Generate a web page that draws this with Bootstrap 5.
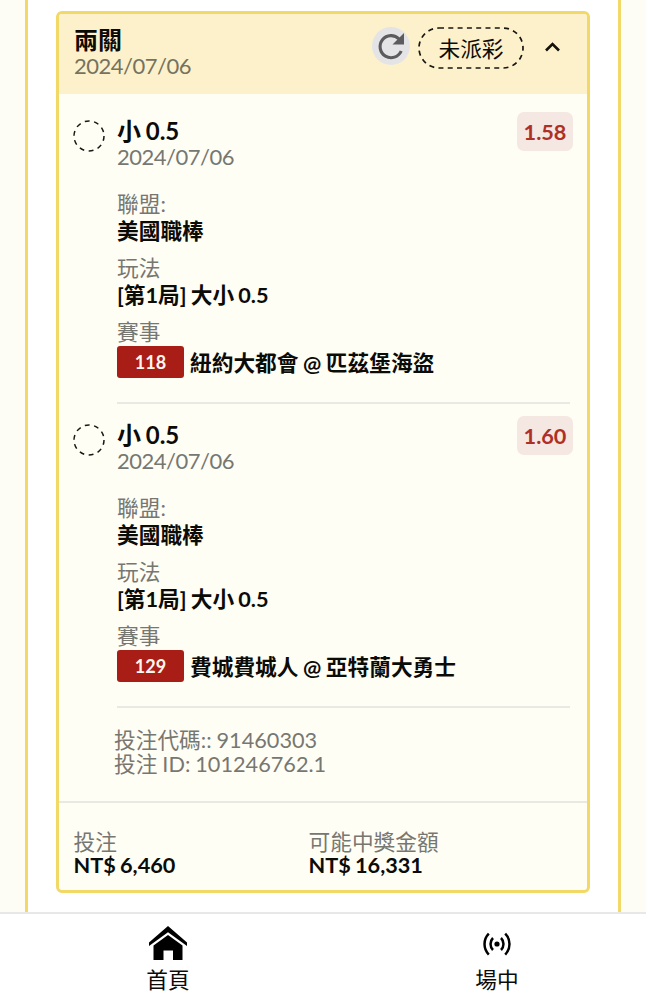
<!DOCTYPE html>
<html lang="zh-Hant">
<head>
<meta charset="utf-8">
<meta name="viewport" content="width=device-width, initial-scale=1">
<title>投注紀錄</title>
<link href="https://cdn.jsdelivr.net/npm/bootstrap@5.3.0/dist/css/bootstrap.min.css" rel="stylesheet">
<style>
  body { font-family: Lato, "Noto Sans CJK TC", sans-serif; font-size: 21.7px; line-height: 27px; color: #0b0b08; background: #fefdf5; height: 1000px; overflow: hidden; }
  .sheet { width: 596px; margin-left: 25px; height: 912px; border: solid #f2d967; border-width: 0 3px; background: #fff; padding: 11px 28px 0; }
  .slip { border: 3px solid #f2d967; border-radius: 6px; background: #fffef5; height: 882px; overflow: hidden; }
  .slip-head { height: 80px; background: #fcf1cb; padding: 13px 14px 0 15px; }
  .slip-head .quiet { color: #77715d; }
  .quiet { color: #777772; }
  .strong { font-weight: 700; word-spacing: -1.1px; }
  .tight { line-height: 25.5px; }
  .title { font-size: 24px; }
  .date { font-size: 22px; letter-spacing: -.5px; }
  .reload { width: 38px; height: 38px; background: #e4e4e6; }
  .leg { padding: 24px 14px 0; height: 304px; }
  .dot { width: 32px; height: 32px; margin: 2px 12px 0 0; }
  .leg-body { border-bottom: 2px solid #e9e9e3; margin-right: 3px; height: 286px; }
  .odds { width: 56px; height: 39px; line-height: 40px; border-radius: 7px; background: #f5e7e1; color: #ad3027; margin: -6px -3px 0 0; }
  .pair { margin-bottom: 10px; }
  .first { margin-top: 22px; }
  .num { width: 67px; height: 32px; line-height: 33px; border-radius: 3px; background: #a91d17; color: #fff7ee; font-size: 18px; margin-right: 6px; }
  .teams { padding-top: 2px; word-spacing: -.7px; }
  .codes { padding: 27px 0 0 55px; line-height: 23.7px; height: 99px; word-spacing: -.6px; }
  .totals { border-top: 2px solid #e9e9e3; padding: 28px 14.5px 0; line-height: 23px; }
  .stake { width: 235px; }
  .tabs { height: 88px; border-top: 2px solid #e8e8e8; background: #fff; line-height: 26px; }
  .tab-home { width: 336px; }
  .tab-live { width: 322px; }
</style>
</head>
<body>
<main class="sheet">
  <section class="slip">
    <header class="slip-head d-flex justify-content-between">
      <div class="tight">
        <div class="strong title">兩關</div>
        <div class="quiet date">2024/07/06</div>
      </div>
      <div class="d-flex align-items-start">
        <div class="reload rounded-circle">
          <svg class="d-block" width="38" height="38" viewBox="0 0 38 38"><path d="M29.200 24A11 11 0 1 1 27 12" fill="none" stroke="#5c5c5e" stroke-width="3.100"/><path d="M32 6v11.500H20.500z" fill="#5c5c5e"/></svg>
        </div>
        <div class="ms-2 d-grid" style="width:106px">
          <svg style="grid-area:1/1" width="106" height="42" viewBox="0 0 106 42"><rect x="1" y="1" width="104" height="40" rx="20" fill="none" stroke="#171611" stroke-width="1.7" stroke-dasharray="5 4.3"/></svg>
          <div class="text-center" style="grid-area:1/1;line-height:45px">未派彩</div>
        </div>
        <svg style="margin:13px 12px 0 20px" width="17" height="14" viewBox="0 0 17 14"><path d="M2 10.5 8.5 4l6.500 6.500" fill="none" stroke="#12110c" stroke-width="2.600"/></svg>
      </div>
    </header>

    <article class="leg d-flex">
      <svg class="dot flex-shrink-0" viewBox="0 0 32 32"><circle cx="16" cy="16" r="15" fill="none" stroke="#171714" stroke-width="1.5" stroke-dasharray="4.9 4.524"/></svg>
      <div class="leg-body flex-grow-1">
        <div class="d-flex justify-content-between tight">
          <div><div class="strong title">小 0.5</div><div class="quiet date">2024/07/06</div></div>
          <div class="odds strong text-center">1.58</div>
        </div>
        <div class="pair first"><div class="quiet">聯盟:</div><div class="strong">美國職棒</div></div>
        <div class="pair"><div class="quiet">玩法</div><div class="strong">[第1局] 大小 0.5</div></div>
        <div class="quiet">賽事</div>
        <div class="d-flex align-items-center"><span class="num text-center strong">118</span><span class="strong teams">紐約大都會 @ 匹茲堡海盜</span></div>
      </div>
    </article>

    <article class="leg d-flex">
      <svg class="dot flex-shrink-0" viewBox="0 0 32 32"><circle cx="16" cy="16" r="15" fill="none" stroke="#171714" stroke-width="1.5" stroke-dasharray="4.9 4.524"/></svg>
      <div class="leg-body flex-grow-1">
        <div class="d-flex justify-content-between tight">
          <div><div class="strong title">小 0.5</div><div class="quiet date">2024/07/06</div></div>
          <div class="odds strong text-center">1.60</div>
        </div>
        <div class="pair first"><div class="quiet">聯盟:</div><div class="strong">美國職棒</div></div>
        <div class="pair"><div class="quiet">玩法</div><div class="strong">[第1局] 大小 0.5</div></div>
        <div class="quiet">賽事</div>
        <div class="d-flex align-items-center"><span class="num text-center strong">129</span><span class="strong teams">費城費城人 @ 亞特蘭大勇士</span></div>
      </div>
    </article>

    <div class="codes quiet">
      <div>投注代碼:: 91460303</div>
      <div>投注 ID: 101246762.1</div>
    </div>
    <footer class="totals d-flex">
      <div class="stake"><div class="quiet">投注</div><div class="strong">NT$ 6,460</div></div>
      <div><div class="quiet">可能中獎金額</div><div class="strong">NT$ 16,331</div></div>
    </footer>
  </section>
</main>
<nav class="tabs d-flex">
  <a class="tab-home flex-shrink-0 d-flex flex-column align-items-center text-reset text-decoration-none">
    <svg style="margin-top:12px" width="38" height="35" viewBox="0 0 38 35"><path d="M0 16.5 19 0l19 16.5V20L19 6.200 0 20z"/><path d="M4.500 19.500 19 9l14.500 10.500V34H24v-9.500h-9.500V34h-10z"/></svg>
    <span style="margin-top:6px">首頁</span>
  </a>
  <a class="tab-live flex-shrink-0 d-flex flex-column align-items-center text-reset text-decoration-none">
    <svg style="margin-top:17px" width="30" height="26" viewBox="0 0 30 26"><circle cx="15" cy="13" r="2.600"/><path d="M6.800 2.500a15 15 0 0 0 0 21M23.200 2.500a15 15 0 0 1 0 21M11 7a8.500 8.500 0 0 0 0 12M19 7a8.500 8.500 0 0 1 0 12" fill="none" stroke="#000" stroke-width="2.500"/></svg>
    <span style="margin-top:10px">場中</span>
  </a>
</nav>
<script src="https://cdn.jsdelivr.net/npm/bootstrap@5.3.0/dist/js/bootstrap.bundle.min.js"></script>
</body>
</html>
